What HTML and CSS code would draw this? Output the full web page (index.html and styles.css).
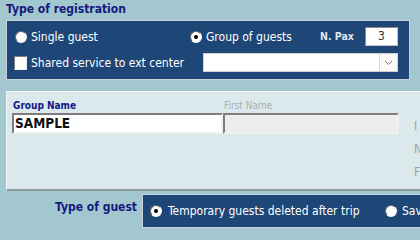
FILE: index.html
```html
<!DOCTYPE html>
<html>
<head>
<meta charset="utf-8">
<link rel="stylesheet" href="styles.css">
</head>
<body>
<div class="page">
  <div class="title">Type of registration</div>
  <div class="reg">
    <div class="row row1">
      <label class="opt opt-single"><span class="radio"></span>Single guest</label>
      <label class="opt opt-group"><span class="radio on"></span>Group of guests</label>
      <span class="pax-label">N. Pax</span>
      <span class="pax">3</span>
    </div>
    <div class="row row2">
      <label class="opt opt-shared"><span class="check"></span>Shared service to ext center</label>
      <div class="combo">
        <span class="combo-btn">
          <svg width="9" height="6" viewBox="0 0 9 6"><polyline points="1,1 4.5,4.5 8,1" fill="none" stroke="#7a7a7a" stroke-width="1"/></svg>
        </span>
      </div>
    </div>
  </div>
  <div class="names">
    <div class="field field-group">
      <div class="flabel strong">Group Name</div>
      <div class="input">SAMPLE</div>
    </div>
    <div class="field field-first">
      <div class="flabel dim">First Name</div>
      <div class="input disabled"></div>
    </div>
    <div class="side">
      <span>I</span>
      <span>N</span>
      <span>F</span>
    </div>
  </div>
  <div class="guest">
    <div class="guest-label">Type of guest</div>
    <div class="guest-panel">
      <label class="opt opt-temp"><span class="radio on"></span>Temporary guests deleted after trip</label>
      <label class="opt opt-saved"><span class="radio"></span>Saved guests</label>
    </div>
  </div>
</div>
</body>
</html>
```
FILE: styles.css
```css
html, body {
  margin: 0;
  padding: 0;
}
body {
  width: 420px;
  height: 240px;
  overflow: hidden;
  background: #a2c7cf;
  font-family: "DejaVu Sans Condensed", "DejaVu Sans", sans-serif;
  font-size: 12px;
}
.page {
  width: 440px;
}
.title {
  height: 20px;
  padding-left: 6px;
  box-sizing: border-box;
  padding-top: 2px;
  font-weight: bold;
  font-size: 12px;
  color: #14197f;
  line-height: 14px;
}
.reg {
  margin-left: 6px;
  width: 404px;
  height: 60px;
  box-sizing: border-box;
  border: 1px solid #c9d2da;
  background: #1e4677;
  padding: 6px 0 0 7px;
  display: flex;
  flex-direction: column;
  gap: 7px;
  color: #ffffff;
}
.row {
  display: flex;
  align-items: center;
  height: 19px;
}
.opt {
  display: flex;
  align-items: center;
  gap: 4px;
  white-space: nowrap;
  flex: none;
}
.opt-single {
  width: 175px;
  padding-left: 1px;
}
.opt-group {
  width: 130px;
}
.pax-label {
  width: 45px;
  font-size: 10.5px;
  font-weight: bold;
  color: #dfe6f0;
  position: relative;
  top: -1px;
  flex: none;
}
.pax {
  width: 33px;
  height: 19px;
  box-sizing: border-box;
  background: #fff;
  color: #333;
  text-align: center;
  line-height: 17px;
  border: 1px solid #c8c8c8;
  border-top-color: #8a8a8a;
  border-left-color: #8a8a8a;
  flex: none;
}
.opt-shared {
  width: 189px;
}
.radio {
  width: 12px;
  height: 12px;
  box-sizing: border-box;
  border-radius: 50%;
  background: #fff;
  border: 1.5px solid #f4f4f4;
  border-top-color: #6b6b6b;
  border-left-color: #6b6b6b;
  display: flex;
  align-items: center;
  justify-content: center;
  flex: none;
}
.radio.on::after {
  content: "";
  width: 4px;
  height: 4px;
  border-radius: 50%;
  background: #000;
}
.check {
  width: 13px;
  height: 14px;
  box-sizing: border-box;
  background: #fff;
  border: 1px solid #f0f0f0;
  border-top-color: #7a7a7a;
  border-left-color: #7a7a7a;
  flex: none;
}
.combo {
  width: 195px;
  height: 19px;
  box-sizing: border-box;
  background: #fff;
  border: 1px solid #cfcfcf;
  display: flex;
  justify-content: flex-end;
  flex: none;
}
.combo-btn {
  width: 17px;
  border-left: 1px solid #d8d8d8;
  display: flex;
  align-items: center;
  justify-content: center;
  background: #fafafa;
}
.names {
  margin-top: 11px;
  margin-left: 6px;
  height: 100px;
  box-sizing: border-box;
  background: #dbe9ec;
  border-top: 1px solid #eef6f8;
  border-left: 1px solid #eef6f8;
  border-bottom: 2px solid #8f9da2;
  display: flex;
  padding: 8px 0 0 5px;
}
.field {
  flex: none;
}
.field-group {
  width: 211px;
}
.field-first {
  width: 176px;
}
.flabel {
  height: 13px;
  font-size: 10px;
  line-height: 12px;
  margin-left: 1px;
}
.strong {
  font-weight: bold;
  color: #101a86;
}
.dim {
  color: #a7aeb0;
}
.input {
  height: 21px;
  box-sizing: border-box;
  background: #fff;
  border: 2px solid #f0f0f0;
  border-top-color: #7d7d7d;
  border-left-color: #7d7d7d;
  font-weight: bold;
  font-size: 13.5px;
  color: #111;
  line-height: 17px;
  padding-left: 1px;
}
.input.disabled {
  background: #ededed;
}
.side {
  margin-left: 15px;
  padding-top: 19px;
  display: flex;
  flex-direction: column;
  gap: 9px;
  color: #98a2a5;
  font-size: 12px;
  line-height: 14px;
  flex: none;
}
.guest {
  margin-top: 3px;
  display: flex;
  align-items: flex-start;
}
.guest-label {
  width: 142px;
  text-align: right;
  font-weight: bold;
  font-size: 12px;
  color: #14197f;
  padding-top: 6px;
  padding-right: 5px;
  box-sizing: border-box;
  flex: none;
}
.guest-panel {
  height: 34px;
  width: 320px;
  box-sizing: border-box;
  background: #1e4677;
  border: 1px solid #c9d2da;
  color: #fff;
  display: flex;
  align-items: center;
  padding-left: 7px;
  flex: none;
}
.opt-temp {
  width: 235px;
  gap: 6px;
}
.opt-saved {
  gap: 5px;
}
```
